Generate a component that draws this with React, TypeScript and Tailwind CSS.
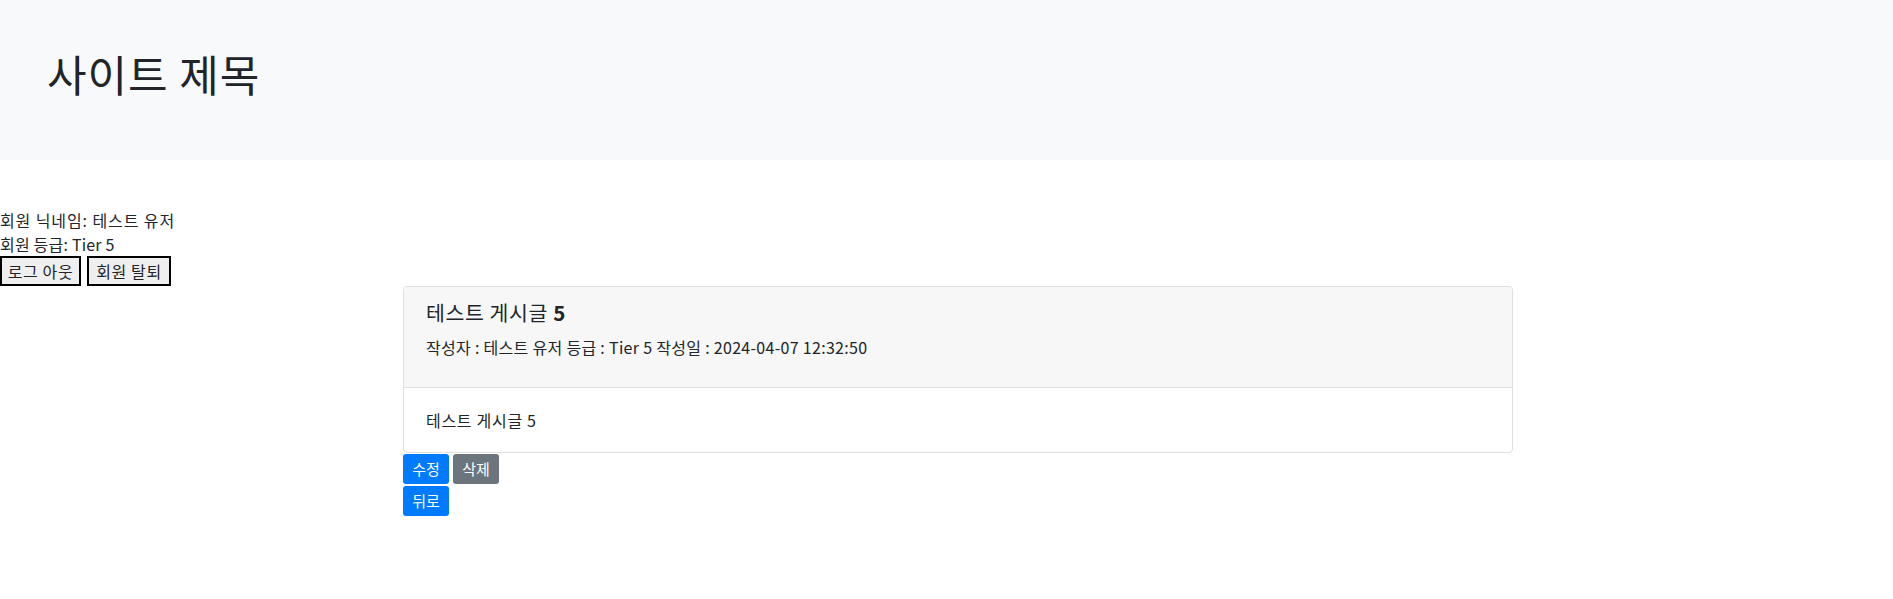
import React from "react";

const font = { fontFamily: '"Noto Sans CJK KR", "Noto Sans", sans-serif' };

export default function App() {
  return (
    <div className="w-[1893px] h-[599px] bg-white text-[#212529]" style={font}>
      <div className="h-[160px] bg-[#f8f9fa] flex items-center pl-[47px]">
        <h1 className="text-[43px] font-normal leading-none -mt-[14px] tracking-[1px] text-[#212529]">사이트 제목</h1>
      </div>
      <div className="pt-[48px] text-[16px] leading-[24px]">
        <div className="tracking-[0.9px]">회원 닉네임: 테스트 유저</div>
        <div className="tracking-[0.2px]">회원 등급: Tier 5</div>
        <div className="flex gap-[6px]">
          <button className="h-[30px] w-[81px] border-2 border-black bg-[#efefef] text-[16px] tracking-[0.6px] leading-none">로그 아웃</button>
          <button className="h-[30px] w-[84px] border-2 border-black bg-[#efefef] text-[16px] tracking-[0.6px] leading-none">회원 탈퇴</button>
        </div>
      </div>
      <div className="ml-[403px] w-[1110px]">
        <div className="border border-[#dfdfdf] rounded-[4px] overflow-hidden">
          <div className="bg-[#f7f7f7] border-b border-[#dfdfdf] h-[101px] px-[22px] pt-[12px]">
            <div className="text-[20.5px] leading-[26px] font-normal tracking-[0.6px]">테스트 게시글 <span className="font-semibold">5</span></div>
            <div className="text-[16px] leading-[24px] mt-[10px] tracking-[0.3px]">작성자 : 테스트 유저 등급 : Tier 5 작성일 : 2024-04-07 12:32:50</div>
          </div>
          <div className="h-[64px] px-[22px] flex items-center text-[16px] tracking-[0.7px]">테스트 게시글 5</div>
        </div>
        <div className="flex gap-[4px] mt-[1px]">
          <button className="w-[46px] h-[30px] rounded-[3px] bg-[#007bff] text-white text-[15px]">수정</button>
          <button className="w-[46px] h-[30px] rounded-[3px] bg-[#6c757d] text-white text-[15px]">삭제</button>
        </div>
        <div className="mt-[2px]">
          <button className="w-[46px] h-[30px] rounded-[3px] bg-[#007bff] text-white text-[15px]">뒤로</button>
        </div>
      </div>
    </div>
  );
}
